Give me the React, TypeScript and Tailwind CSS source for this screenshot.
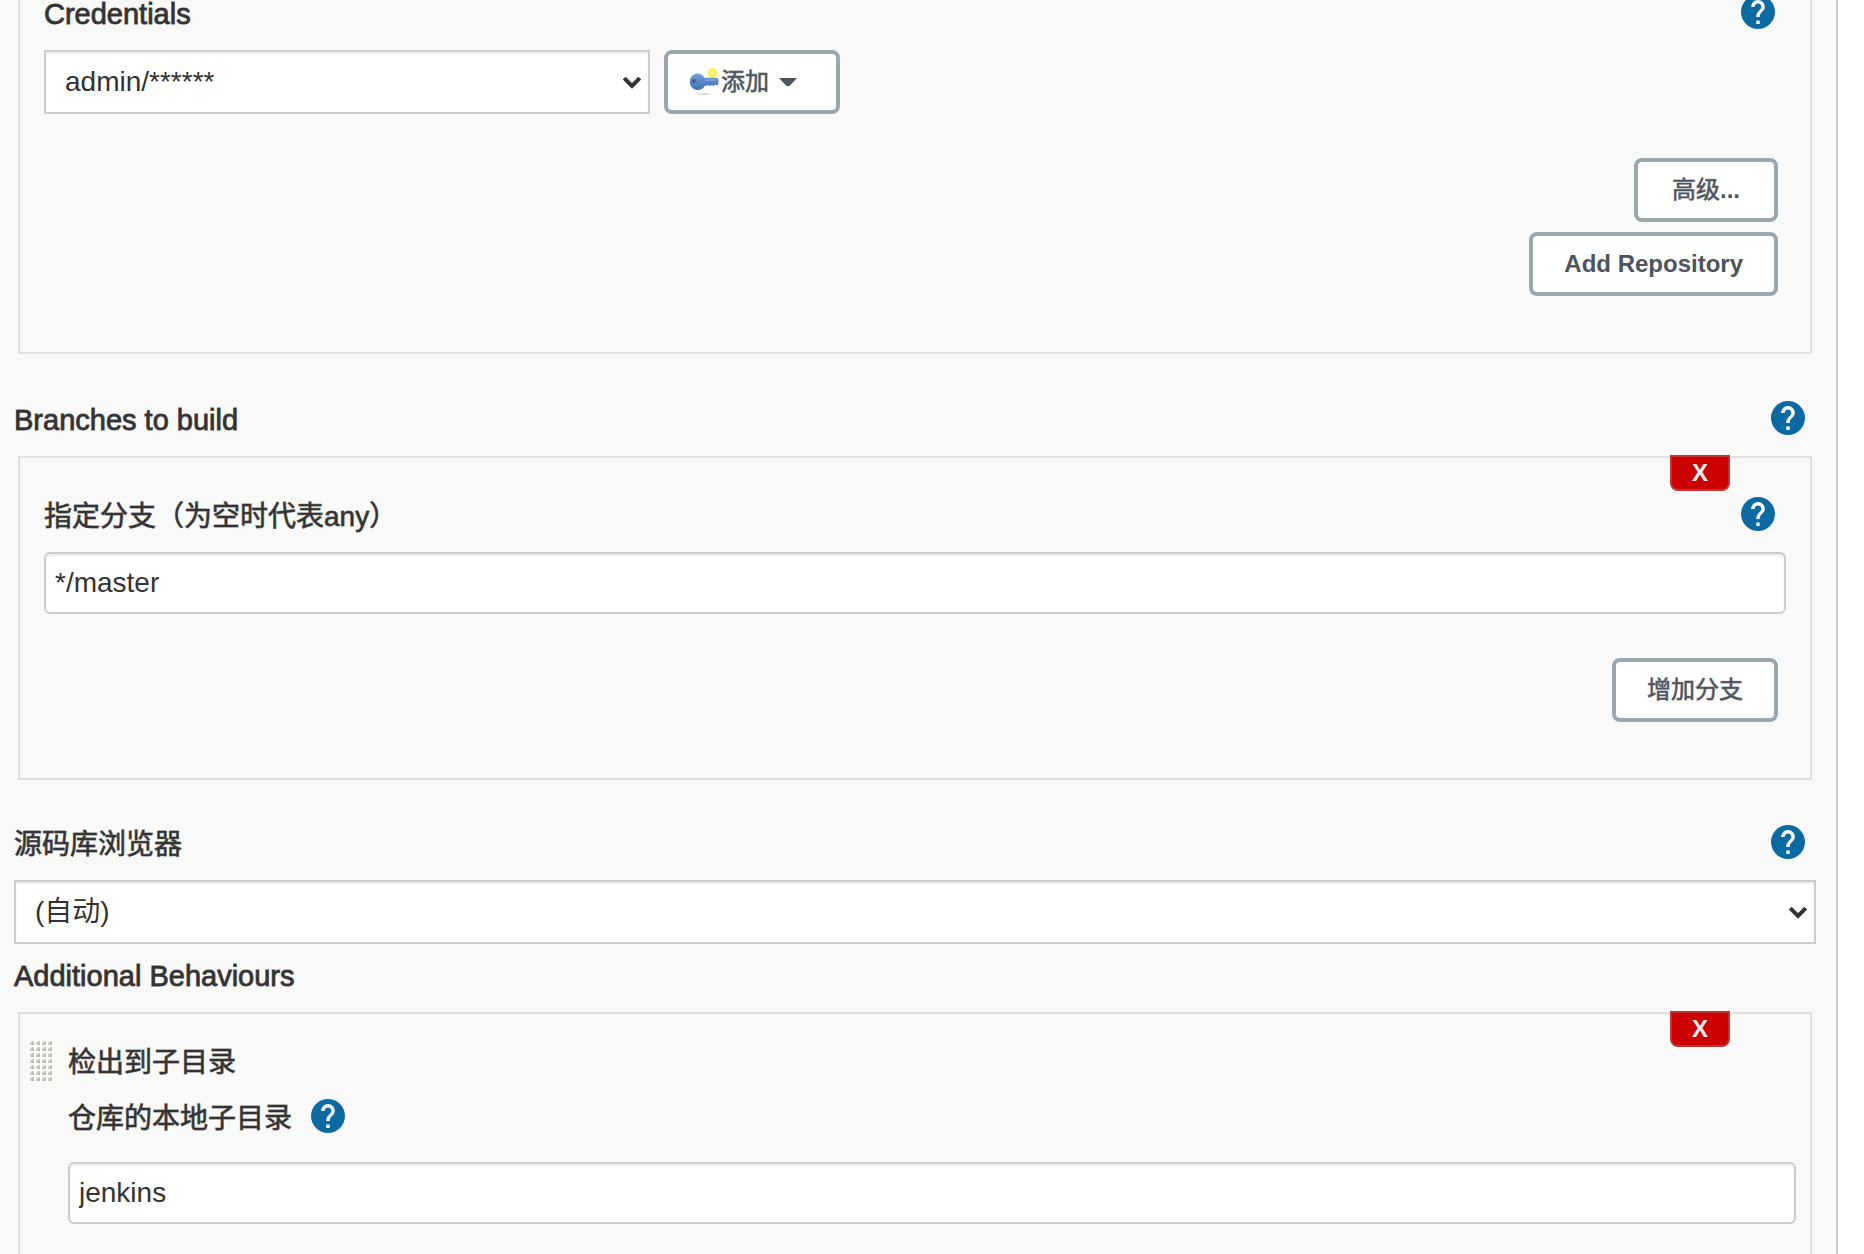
import { useState } from 'react';
import type { ReactNode } from 'react';

const latinLabel = 'text-[29px] leading-[38px] [-webkit-text-stroke:1px_#333333d9]';
const cjkLabel = 'text-[28px] leading-10 [-webkit-text-stroke:1px_#333333a6]';
const cjkButtonText = '[-webkit-text-stroke:1px_#4d545d99]';
const inputClass =
  'block h-[62px] w-full rounded-md border-2 border-[#ccc] bg-white px-[9px] text-[28px] text-[#333] shadow-[inset_0_2px_2px_rgba(0,0,0,0.08)] outline-none';

function HelpButton({ label }: { label: string }) {
  return (
    <button type="button" aria-label={`Help for ${label}`} className="size-[34px] shrink-0 cursor-pointer">
      <svg viewBox="2 2 20 20" className="size-full" fill="#0b6aa2">
        <circle cx="12" cy="12" r="10" />
        <path
          fill="#fff"
          d="M13 19h-2v-2h2v2zm2.07-7.75l-.9.92C13.45 12.9 13 13.5 13 15h-2v-.5c0-1.1.45-2.1 1.17-2.83l1.24-1.26c.37-.36.59-.86.59-1.41 0-1.1-.9-2-2-2s-2 .9-2 2H8c0-2.21 1.79-4 4-4s4 1.79 4 4c0 .88-.36 1.68-.93 2.25z"
        />
      </svg>
    </button>
  );
}

function FieldHeader({
  label,
  htmlFor,
  help = true,
  className = latinLabel,
}: {
  label: string;
  htmlFor?: string;
  help?: boolean;
  className?: string;
}) {
  return (
    <div className="mb-[21px] flex h-[34px] items-start justify-between pr-[11px]">
      {htmlFor ? (
        <label htmlFor={htmlFor} className={className}>{label}</label>
      ) : (
        <h2 className={className}>{label}</h2>
      )}
      {help && <HelpButton label={label} />}
    </div>
  );
}

function Button({ children, className = 'px-[31px]' }: { children: ReactNode; className?: string }) {
  return (
    <button
      type="button"
      className={`flex h-16 min-w-36 cursor-pointer items-center justify-center rounded-lg border-4 border-[#9aa7af] bg-white text-2xl text-[#4d545d] ${className}`}
    >
      {children}
    </button>
  );
}

function DeleteButton() {
  return (
    <button
      type="button"
      aria-label="X"
      className="absolute -top-[3px] right-20 flex h-9 w-[60px] cursor-pointer items-center justify-center rounded-b-lg border-2 border-[#bd362f] bg-[#c00] text-2xl font-bold text-[#eee]"
    >
      X
    </button>
  );
}

function Select({ id, options }: { id: string; options: string[] }) {
  return (
    <div className="relative w-full">
      <select
        id={id}
        className="block h-16 w-full appearance-none rounded-none border-2 border-[#ccc] bg-white pr-12 pl-[19px] text-[28px] text-[#333] shadow-[inset_0_2px_2px_rgba(0,0,0,0.08)] outline-none"
      >
        {options.map((o) => (
          <option key={o}>{o}</option>
        ))}
      </select>
      <svg
        viewBox="0 0 20 14"
        className="pointer-events-none absolute top-[26px] right-2 h-3.5 w-5"
        fill="none"
        stroke="#333"
        strokeWidth="4"
      >
        <path d="M2.2 2.2 10 10l7.800-7.800" />
      </svg>
    </div>
  );
}

function KeyIcon() {
  return (
    <svg viewBox="0 0 32 32" className="size-8 shrink-0">
      <defs>
        <linearGradient id="key" x1="0" y1="0" x2="0" y2="1">
          <stop offset="0" stopColor="#6f9fd8" />
          <stop offset="1" stopColor="#3f72b4" />
        </linearGradient>
        <radialGradient id="shade">
          <stop offset="0" stopColor="#bbb" />
          <stop offset="1" stopColor="#fff" stopOpacity="0" />
        </radialGradient>
      </defs>
      <ellipse cx="16" cy="28" rx="13" ry="2" fill="url(#shade)" />
      <circle cx="24.500" cy="7" r="5" fill="#fdf9a0" />
      <circle cx="24.500" cy="7" r="3.200" fill="none" stroke="#fbee35" strokeWidth="2" />
      <path
        fill="url(#key)"
        d="M9.500 7.500c3.200 0 5.500 1.700 6.800 4.200h12.200c1.200 0 1.900.9 1.900 2v3.600c0 1.400-.7 2.200-1.700 2.200l-1.500-1-1.600 1.600-1.800-1.200-1.800 1.200-2-.8-3.300.6c-1.300 2.600-4 4-7.200 4-4.400 0-7.700-3.600-7.700-8.200s3.300-8.200 7.700-8.200z"
      />
      <circle cx="6" cy="15" r="2" fill="#41608d" />
      <path d="M16 14h12" stroke="#8db2e2" strokeWidth="1" />
    </svg>
  );
}

function DragHandle() {
  return (
    <svg className="h-[43px] w-6 shrink-0 cursor-move">
      <defs>
        <pattern id="dots" width="6" height="6" patternUnits="userSpaceOnUse">
          <rect width="6" height="6" fill="#fdfdfc" />
          <path d="M1 5V3l2-2h2v4z" fill="#ccc9c3" />
          <path d="M3 3h2v2H3z" fill="#bbb8b1" />
        </pattern>
      </defs>
      <rect width="24" height="43" fill="url(#dots)" />
    </svg>
  );
}

function Credentials() {
  return (
    <section className="mx-1 border-2 border-t-0 border-[#e0e0e0] px-6 pb-14">
      {/* first row sits against the top edge of the scrolled form */}
      <div className="mb-[21px] flex h-[29px] items-end justify-between pr-[11px]">
        <label htmlFor="credentials" className="text-[29px] leading-[29px] [-webkit-text-stroke:1px_#333333d9]">
          Credentials
        </label>
        <HelpButton label="Credentials" />
      </div>
      <div className="flex gap-3.5">
        <div className="w-[606px]">
          <Select id="credentials" options={['admin/******']} />
        </div>
        <Button className="pr-[39px] pl-5">
          <KeyIcon />
          <span className={`ml-px ${cjkButtonText}`}>添加</span>
          <svg viewBox="0 0 18 9" className="ml-2.5 h-[9px] w-[18px]" fill="#4d545d">
            <path d="M0 0h18L11 7.500q-2 1.500-4 0z" />
          </svg>
        </Button>
      </div>
      <div className="mt-11 mr-2 flex flex-col items-end gap-2.5">
        <Button>
          <span className={cjkButtonText}>高级</span>
          <b>...</b>
        </Button>
        <Button>
          <b>Add Repository</b>
        </Button>
      </div>
    </section>
  );
}

function Branches() {
  const [branch, setBranch] = useState('*/master');

  return (
    <section className="relative mx-1 border-2 border-[#e0e0e0] px-6 pt-[39px] pb-14">
      <DeleteButton />
      <FieldHeader label="指定分支（为空时代表any）" htmlFor="branch" className={cjkLabel} />
      <input id="branch" type="text" value={branch} onChange={(e) => setBranch(e.target.value)} className={inputClass} />
      <div className="mt-11 mr-2 flex justify-end">
        <Button>
          <span className={cjkButtonText}>增加分支</span>
        </Button>
      </div>
    </section>
  );
}

function Behaviours() {
  const [dir, setDir] = useState('jenkins');

  return (
    <section className="relative mx-1 flex grow gap-[15px] border-2 border-b-0 border-[#e0e0e0] pt-[26px] pr-3.5 pb-[30px] pl-[9px]">
      <DeleteButton />
      <DragHandle />
      <div className="grow pt-[3px]">
        <h3 className={`h-[34px] ${cjkLabel}`}>检出到子目录</h3>
        <div className="mt-[22px] mb-[29px] flex h-[34px] items-start gap-[19px]">
          <label htmlFor="local-dir" className={cjkLabel}>仓库的本地子目录</label>
          <HelpButton label="仓库的本地子目录" />
        </div>
        <input id="local-dir" type="text" value={dir} onChange={(e) => setDir(e.target.value)} className={inputClass} />
      </div>
    </section>
  );
}

export default function App() {
  return (
    <div
      lang="zh-CN"
      className="min-h-screen bg-white pr-[26px] font-['Liberation_Sans','Noto_Sans_CJK_SC',sans-serif] text-[#333]"
    >
      <main className="flex min-h-screen flex-col border-r-2 border-[#ccc] bg-[#f9f9f9] pr-5 pl-3.5">
        <Credentials />
        <div className="mt-[47px]">
          <FieldHeader label="Branches to build" />
        </div>
        <Branches />
        <div className="mt-[45px] mb-[13px]">
          <FieldHeader label="源码库浏览器" htmlFor="browser" className={cjkLabel} />
          <Select id="browser" options={['(自动)']} />
        </div>
        <FieldHeader label="Additional Behaviours" help={false} />
        <Behaviours />
      </main>
    </div>
  );
}
